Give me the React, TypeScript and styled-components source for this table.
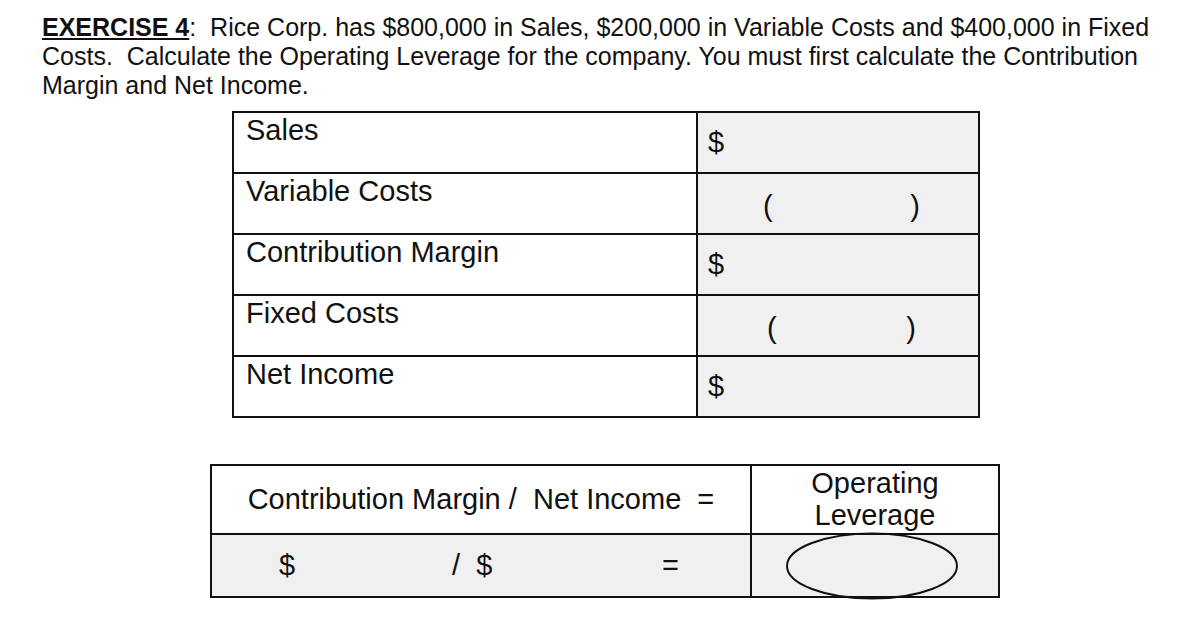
import { Fragment } from "react";
import styled, { createGlobalStyle } from "styled-components";

const GlobalStyle = createGlobalStyle`
  html, body {
    margin: 0;
    padding: 0;
    background: #ffffff;
  }
  body {
    font-family: "Liberation Sans", Arial, sans-serif;
    color: #111111;
  }
  * {
    box-sizing: border-box;
  }
`;

const Page = styled.div`
  width: 1180px;
  height: 624px;
  overflow: hidden;
  display: flex;
  flex-direction: column;
  align-items: flex-start;
`;

const Prompt = styled.p`
  margin: 0;
  padding: 13px 0 0 42px;
  font-size: 25px;
  line-height: 29px;
  white-space: pre;
`;

const ExerciseTag = styled.span`
  font-weight: 700;
  text-decoration: underline;
  text-decoration-thickness: 2px;
  text-underline-offset: 2px;
`;

const Worksheet = styled.div`
  margin: 11px 0 0 232px;
  display: grid;
  grid-template-columns: 464px 282px;
  grid-auto-rows: 61px;
  border-top: 2px solid #111;
  border-left: 2px solid #111;
  font-size: 29px;
  line-height: 1.15;
`;

const LabelCell = styled.div`
  padding: 1px 0 0 12px;
  border-right: 2px solid #111;
  border-bottom: 2px solid #111;
  background: #ffffff;
`;

const AmountCell = styled.div`
  display: flex;
  align-items: center;
  padding: 0 0 0 10px;
  border-right: 2px solid #111;
  border-bottom: 2px solid #111;
  background: #f0f0f0;
`;

const Parens = styled.div<{ $left: number; $right: number }>`
  flex: 1;
  display: flex;
  justify-content: space-between;
  padding: 6px ${p => p.$right}px 0 ${p => p.$left}px;
`;

const Formula = styled.div`
  margin: 46px 0 0 210px;
  display: grid;
  grid-template-columns: 540px 248px;
  grid-template-rows: 69px 63px;
  border-top: 2px solid #111;
  border-left: 2px solid #111;
  font-size: 29px;
  line-height: 1.1;
`;

const FormulaCell = styled.div<{ $shaded?: boolean }>`
  position: relative;
  display: flex;
  align-items: center;
  justify-content: center;
  text-align: center;
  white-space: pre;
  border-right: 2px solid #111;
  border-bottom: 2px solid #111;
  background: ${p => (p.$shaded ? "#f0f0f0" : "#ffffff")};
`;

const Terms = styled.div`
  width: 100%;
  display: grid;
  grid-template-columns: 67px 173px 210px auto;
  align-items: center;
  text-align: left;
  white-space: pre;
`;

const Oval = styled.svg`
  position: absolute;
  left: 34px;
  top: -3px;
  overflow: visible;
`;

const rows = [
  { label: "Sales", kind: "dollar", left: 0, right: 0 },
  { label: "Variable Costs", kind: "paren", left: 55, right: 58 },
  { label: "Contribution Margin", kind: "dollar", left: 0, right: 0 },
  { label: "Fixed Costs", kind: "paren", left: 59, right: 62 },
  { label: "Net Income", kind: "dollar", left: 0, right: 0 },
];

export default function App() {
  return (
    <Page>
      <GlobalStyle />
      <Prompt>
        <ExerciseTag>EXERCISE 4</ExerciseTag>
        {":  Rice Corp. has $800,000 in Sales, $200,000 in Variable Costs and $400,000 in Fixed\nCosts.  Calculate the Operating Leverage for the company. You must first calculate the Contribution\nMargin and Net Income."}
      </Prompt>

      <Worksheet>
        {rows.map(r => (
          <Fragment key={r.label}>
            <LabelCell>{r.label}</LabelCell>
            <AmountCell>
              {r.kind === "dollar" ? (
                "$"
              ) : (
                <Parens $left={r.left} $right={r.right}>
                  <span>(</span>
                  <span>)</span>
                </Parens>
              )}
            </AmountCell>
          </Fragment>
        ))}
      </Worksheet>

      <Formula>
        <FormulaCell>{"Contribution Margin /  Net Income  ="}</FormulaCell>
        <FormulaCell>
          Operating
          <br />
          Leverage
        </FormulaCell>
        <FormulaCell $shaded>
          <Terms>
            <span />
            <span>$</span>
            <span>{"/  $"}</span>
            <span>=</span>
          </Terms>
        </FormulaCell>
        <FormulaCell $shaded>
          <Oval width="172" height="68" viewBox="0 0 172 68">
            <ellipse cx="86" cy="34" rx="85" ry="32.5" fill="none" stroke="#111" strokeWidth="2" />
          </Oval>
        </FormulaCell>
      </Formula>
    </Page>
  );
}
